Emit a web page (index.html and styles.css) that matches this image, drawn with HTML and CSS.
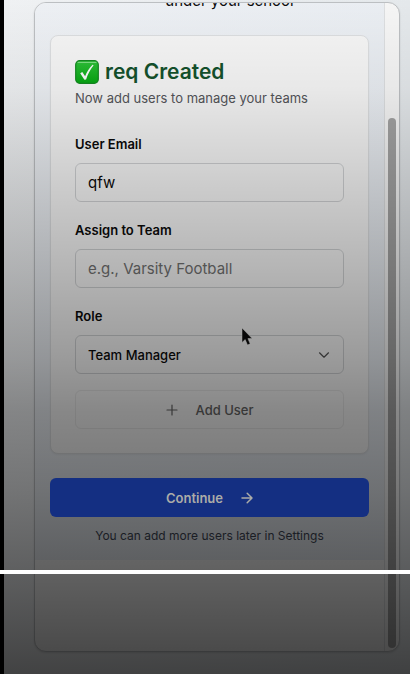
FILE: index.html
```html
<!DOCTYPE html>
<html lang="en">
<head>
<meta charset="utf-8">
<meta name="viewport" content="width=device-width, initial-scale=1">
<title>Add users</title>
<link rel="stylesheet" href="styles.css">
</head>
<body>
<main class="frame">
  <div class="scroll-content">
    <form class="step">
      <p class="intro">under your school</p>
      <section class="card">
        <h1 class="title">
          <svg class="check" viewBox="0 0 24 24" aria-hidden="true">
            <defs><linearGradient id="green" x1="0" y1="0" x2="0" y2="1"><stop offset="0" stop-color="#2fc43a"/><stop offset="1" stop-color="#06a812"/></linearGradient></defs>
            <rect x="0.7" y="0.7" width="22.6" height="22.6" rx="4" fill="url(#green)" stroke="#158b22" stroke-width="1.2"/>
            <path d="M3 2.4h18" stroke="#8be58e" stroke-width="1" stroke-linecap="round"/>
            <path d="M5.2 13.3 7.3 12l2.8 4.3C11.9 11.6 14.3 7.9 17.6 4.7l1 .6c-3.300 4.200-5.800 8.800-7.500 14.200l-1.700.2z" fill="#fff"/>
          </svg>
          <span>req Created</span>
        </h1>
        <p class="subtitle">Now add users to manage your teams</p>
        <div class="field">
          <label for="email">User Email</label>
          <input id="email" class="control" type="text" value="qfw">
        </div>
        <div class="field">
          <label for="team">Assign to Team</label>
          <input id="team" class="control" type="text" placeholder="e.g., Varsity Football">
        </div>
        <div class="field">
          <label for="role">Role</label>
          <div class="select-wrap">
            <select id="role" class="control select"><option>Team Manager</option></select>
            <svg class="chevron" viewBox="0 0 12 12" aria-hidden="true"><path d="M1.500 3.800 6 8.200l4.500-4.400"/></svg>
          </div>
        </div>
        <button class="button add" type="button">
          <svg class="icon" viewBox="0 0 12 12" aria-hidden="true"><path d="M6 1v10M1 6h10"/></svg>
          <span>Add User</span>
        </button>
      </section>
      <button class="button continue" type="button">
        <span>Continue</span>
        <svg class="icon" viewBox="0 0 12 12" aria-hidden="true"><path d="M1 6h10M6.200 1.200 11 6l-4.800 4.800"/></svg>
      </button>
      <p class="note">You can add more users later in Settings</p>
    </form>
  </div>
  <div class="track" aria-hidden="true"><div class="thumb"></div></div>
</main>
<div class="shade"></div>
<div class="rule"></div>
<svg class="cursor" viewBox="0 0 12 18" aria-hidden="true"><path d="M1 0v14.500l3.200-3 2.300 5.500 2.700-1.200-2.300-5.200h4.300z"/></svg>
</body>
</html>
```
FILE: styles.css
```css
* { box-sizing: border-box; }

body {
  margin: 0;
  min-height: 100vh;
  padding: 2px 10px 22px 30px;
  border-left: 4px solid #000;
  background: linear-gradient(90deg, #f4f6f8, #e9edf0);
  color: #0a0a0a;
  font-family: Inter, "Liberation Sans", sans-serif;
  font-size: 13px;
  line-height: 20px;
}

h1, p { margin: 0; }

.frame {
  display: grid;
  grid-template-columns: 1fr 15px;
  min-height: calc(100vh - 24px);
  border: 1px solid #c0c3c6;
  border-radius: 12px;
  overflow: hidden;
  background: #fafafa;
  box-shadow: 0 1px 2px rgba(0, 0, 0, 0.12);
}

.step {
  padding: 0 15px 14px;
  background: linear-gradient(135deg, #f2f5f9, #e9eef4);
}

.intro {
  margin-top: -12px;
  padding: 0 0 24px 40px;
  text-align: center;
  font-size: 15px;
}

.card {
  padding: 24px;
  border: 1px solid #e0e2e4;
  border-radius: 8px;
  background: #fafafa;
  box-shadow: 0 1px 2px rgba(0, 0, 0, 0.05);
}

.title {
  display: flex;
  align-items: center;
  gap: 6px;
  color: #14532d;
  font-size: 21px;
  font-weight: 600;
  line-height: 24px;
}

.check { width: 24px; height: 24px; }

.subtitle {
  margin: 4px 0 26px;
  color: #55565a;
}

.field { margin-bottom: 18px; }
.field:last-of-type { margin-bottom: 16px; }

.field label {
  display: block;
  margin-bottom: 9px;
  font-weight: 600;
}

.control {
  display: block;
  width: 100%;
  height: 39px;
  padding: 0 12px;
  border: 1px solid #d2d4d6;
  border-radius: 6px;
  background: transparent;
  color: #0a0a0a;
  font: inherit;
  font-size: 15px;
}

.control::placeholder { color: #737373; opacity: 1; }

.select-wrap { position: relative; }

.select {
  appearance: none;
  font-size: 13px;
  font-weight: 500;
}

.chevron {
  position: absolute;
  top: 14px;
  right: 14px;
  width: 12px;
  height: 12px;
  color: #555;
  pointer-events: none;
}

.chevron, .icon {
  fill: none;
  stroke: currentColor;
  stroke-width: 1.2;
  stroke-linecap: round;
  stroke-linejoin: round;
}

.icon { width: 12px; height: 12px; }

.button {
  display: flex;
  align-items: center;
  justify-content: center;
  gap: 18px;
  width: 100%;
  height: 39px;
  border-radius: 6px;
  font: inherit;
  font-weight: 500;
}

.add {
  border: 1px solid #eaeaea;
  background: transparent;
  color: #666;
}

.continue {
  position: relative;
  z-index: 1;
  margin-top: 24px;
  border: 0;
  background: #142f82;
  color: #acaca8;
  font-weight: 600;
}

.continue .icon { stroke-width: 1.5; }

.note {
  margin-top: 9px;
  text-align: center;
  color: #3f4755;
  font-size: 12px;
}

.track {
  display: flex;
  flex-direction: column;
  padding: 115px 3px 3px;
  border-left: 1px solid #e0e2e4;
}

.thumb {
  flex: 1;
  width: 8px;
  border-radius: 4px;
  background: #a6a6a6;
}

.shade {
  position: absolute;
  inset: 0;
  pointer-events: none;
  background: linear-gradient(rgba(0, 0, 0, 0.02), rgba(0, 0, 0, 0.07) 13%, rgba(0, 0, 0, 0.18) 27%, rgba(0, 0, 0, 0.28) 40%, rgba(0, 0, 0, 0.38) 53%, rgba(0, 0, 0, 0.46) 61%, rgba(0, 0, 0, 0.53) 73%, rgba(0, 0, 0, 0.6) 83%, rgba(0, 0, 0, 0.69) 95%, rgba(0, 0, 0, 0.73));
}

.rule {
  position: absolute;
  top: 570px;
  left: 0;
  right: 0;
  height: 4px;
  background: #fff;
}

.cursor {
  position: absolute;
  top: 328px;
  left: 241px;
  width: 12px;
  height: 18px;
  fill: #080808;
  stroke: #aaa;
  stroke-width: 0.5;
}
```
